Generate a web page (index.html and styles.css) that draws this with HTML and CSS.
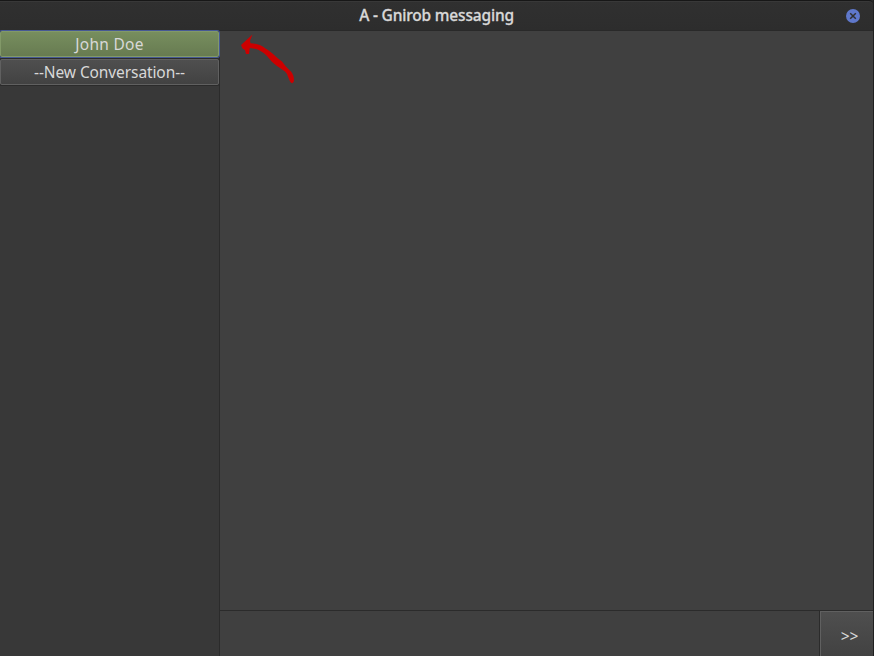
FILE: index.html
```html
<!DOCTYPE html>
<html lang="en">
<head>
<meta charset="utf-8">
<title>A - Gnirob messaging</title>
<link rel="stylesheet" href="styles.css">
</head>
<body>
<div class="window">
  <header class="titlebar">
    <h1 class="title">A - Gnirob messaging</h1>
    <button class="close" aria-label="Close">
      <svg width="14" height="14" viewBox="0 0 14 14"><circle cx="7" cy="7" r="7" fill="#5f78cb"/><path d="M4.2 4.2l5.6 5.6M9.8 4.2l-5.6 5.6" stroke="#303030" stroke-width="1.5"/></svg>
    </button>
  </header>
  <div class="body">
    <nav class="sidebar">
      <button class="item selected"><span class="name">John Doe</span></button>
      <button class="item"><span class="new">--New Conversation--</span></button>
    </nav>
    <main class="chat">
      <div class="messages">
        <svg class="arrow" width="100" height="70" viewBox="0 0 100 70">
          <path d="M21 20L32.5 9.5L30 15.5L30.5 18.2C36 18.3 42 20.5 45.5 23.5C51 26.5 57 33 62 36.5C65 40.5 67 43 71 46.5Q74 50 74 56Q72.5 60 70 56.5L67.5 50.5Q67 48.5 65 46.5L57 41C53 38 50 35 47 31C42 26 37 23.5 29.8 23L29 29H26L25 25L22.5 23.5Z" fill="#cc0000"/>
        </svg>
      </div>
      <div class="composer">
        <div class="input" contenteditable="true"></div>
        <button class="send"><span>&gt;&gt;</span></button>
      </div>
    </main>
  </div>
</div>
</body>
</html>
```
FILE: styles.css
```css
* { box-sizing: border-box; }
body { margin: 0; background: #2d2d2d; font-family: "Noto Sans", sans-serif; color: #d8d8d8; }
button { font: inherit; color: inherit; padding: 0; margin: 0; border: 0; background: none; }
.window {
  width: 874px; height: 656px; display: flex; flex-direction: column;
  overflow: hidden; border-right: 1px solid #202020;
}
.titlebar {
  height: 31px; flex: none; display: grid; grid-template-columns: 1fr auto 1fr;
  align-items: center; background: linear-gradient(#303030, #2d2d2d);
  border-top: 1px solid #171717; box-shadow: inset 0 1px #383838;
  border-bottom: 1px solid #292929; border-top-right-radius: 4px;
}
.title {
  grid-column: 2; margin: 0; padding-bottom: 2px; font-size: 15.5px; line-height: 26px;
  font-weight: 500; letter-spacing: -0.18px; white-space: nowrap;
  -webkit-text-stroke: 0.3px #d8d8d8;
}
.close { justify-self: end; margin-right: 13px; width: 14px; height: 14px; }
.close svg { display: block; }
.body { flex: 1; min-height: 0; display: flex; background: #404040; }
.sidebar {
  width: 220px; flex: none; display: flex; flex-direction: column; gap: 2px;
  background: #383838; border-right: 1px solid #2b2b2b;
}
.item {
  display: flex; align-items: center; justify-content: center; width: 219px; height: 26px;
  padding-bottom: 1px; font-size: 15.5px; line-height: 24px; white-space: nowrap;
  border: 1px solid #606060; border-radius: 2px;
  background: linear-gradient(#4f4f4f, #424242); box-shadow: 0 0 0 1px #2b2b2b;
}
.item.selected {
  position: relative; border-color: #829968; background: linear-gradient(#778e5e, #677b51);
  box-shadow: 0 0 0 1px #465994;
}
.name { letter-spacing: 0.3px; }
.new { letter-spacing: -0.1px; }
.chat { flex: 1; min-width: 0; display: flex; flex-direction: column; }
.messages { flex: 1; position: relative; }
.arrow { position: absolute; left: 0; top: -6px; }
.composer { height: 46px; flex: none; display: flex; border-top: 1px solid #2b2b2b; }
.input { flex: 1; background: #404040; }
.send {
  width: 54px; border-left: 1px solid #2b2b2b; padding: 5px 0 0 6px;
  font-size: 15.5px; background: linear-gradient(#4f4f4f, #424242);
  box-shadow: inset 1px 1px #606060;
}
```
